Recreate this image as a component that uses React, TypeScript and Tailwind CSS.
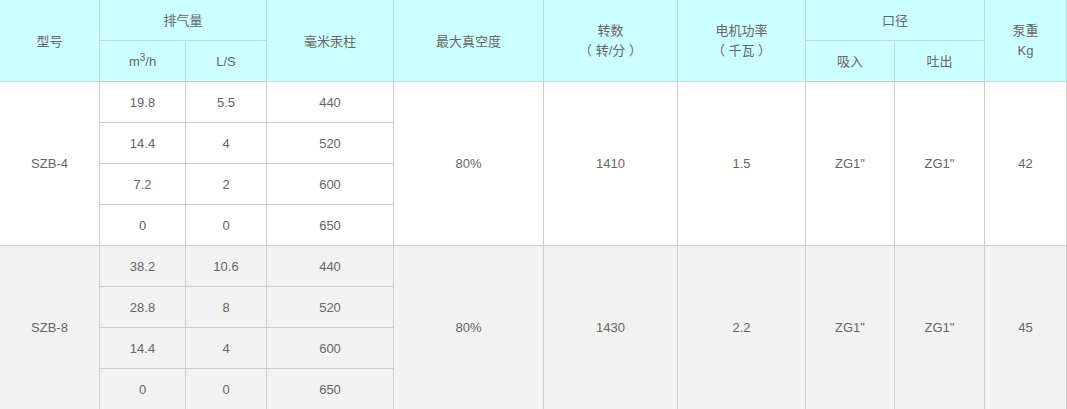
import React from "react";

const widths = [100, 86, 81, 127, 150, 134, 128, 89, 90, 82];

type Group = {
  model: string;
  rows: [string, string, string][];
  vac: string;
  rpm: string;
  kw: string;
  inlet: string;
  outlet: string;
  kg: string;
  bg: string;
};

const groups: Group[] = [
  {
    model: "SZB-4",
    rows: [
      ["19.8", "5.5", "440"],
      ["14.4", "4", "520"],
      ["7.2", "2", "600"],
      ["0", "0", "650"],
    ],
    vac: "80%",
    rpm: "1410",
    kw: "1.5",
    inlet: 'ZG1"',
    outlet: 'ZG1"',
    kg: "42",
    bg: "bg-white",
  },
  {
    model: "SZB-8",
    rows: [
      ["38.2", "10.6", "440"],
      ["28.8", "8", "520"],
      ["14.4", "4", "600"],
      ["0", "0", "650"],
    ],
    vac: "80%",
    rpm: "1430",
    kw: "2.2",
    inlet: 'ZG1"',
    outlet: 'ZG1"',
    kg: "45",
    bg: "bg-[#f2f2f2]",
  },
];

const th = "border-r border-b border-[#b9dcdc] font-normal text-center align-middle p-0";
const td = "border-r border-b border-[#cccccc] text-center align-middle p-0";
const tdSmall = td + " pt-[2px]";

export default function App() {
  return (
    <div
      className="w-[1067px] h-[409px] overflow-hidden bg-white text-[13px] leading-[20px] text-[#666666]"
      style={{ fontFamily: '"Liberation Sans", Arial, "Noto Sans CJK SC", sans-serif' }}
    >
      <table className="table-fixed border-separate border-spacing-0 w-[1067px]">
        <colgroup>
          {widths.map((w, i) => (
            <col key={i} style={{ width: w }} />
          ))}
        </colgroup>
        <thead className="bg-[#ccffff]">
          <tr className="h-[41px]">
            <th rowSpan={2} className={th + " pt-[2px]"}>型号</th>
            <th colSpan={2} className={th + " pt-[2px]"}>排气量</th>
            <th rowSpan={2} className={th + " pt-[2px]"}>毫米汞柱</th>
            <th rowSpan={2} className={th + " pt-[2px]"}>最大真空度</th>
            <th rowSpan={2} className={th}>
              <div>转数</div>
              <div>（ 转/分 ）</div>
            </th>
            <th rowSpan={2} className={th}>
              <div>电机功率</div>
              <div>（ 千瓦 ）</div>
            </th>
            <th colSpan={2} className={th + " pt-[2px]"}>口径</th>
            <th rowSpan={2} className={th}>
              <div>泵重</div>
              <div>Kg</div>
            </th>
          </tr>
          <tr className="h-[41px]">
            <th className={th + " border-b-[#c6c6c6] pt-[2px]"}>
              m<sup className="text-[10px]">3</sup>/h
            </th>
            <th className={th + " border-b-[#c6c6c6] pt-[2px]"}>L/S</th>
            <th className={th + " border-b-[#c6c6c6] pt-[2px]"}>吸入</th>
            <th className={th + " border-b-[#c6c6c6] pt-[2px]"}>吐出</th>
          </tr>
        </thead>
        {groups.map((g) => (
          <tbody key={g.model} className={g.bg}>
            {g.rows.map((r, i) => (
              <tr key={i} className="h-[41px]">
                {i === 0 && (
                  <td rowSpan={4} className={td}>{g.model}</td>
                )}
                <td className={tdSmall}>{r[0]}</td>
                <td className={tdSmall}>{r[1]}</td>
                <td className={tdSmall}>{r[2]}</td>
                {i === 0 && (
                  <>
                    <td rowSpan={4} className={td}>{g.vac}</td>
                    <td rowSpan={4} className={td}>{g.rpm}</td>
                    <td rowSpan={4} className={td}>{g.kw}</td>
                    <td rowSpan={4} className={td}>{g.inlet}</td>
                    <td rowSpan={4} className={td}>{g.outlet}</td>
                    <td rowSpan={4} className={td}>{g.kg}</td>
                  </>
                )}
              </tr>
            ))}
          </tbody>
        ))}
      </table>
    </div>
  );
}
